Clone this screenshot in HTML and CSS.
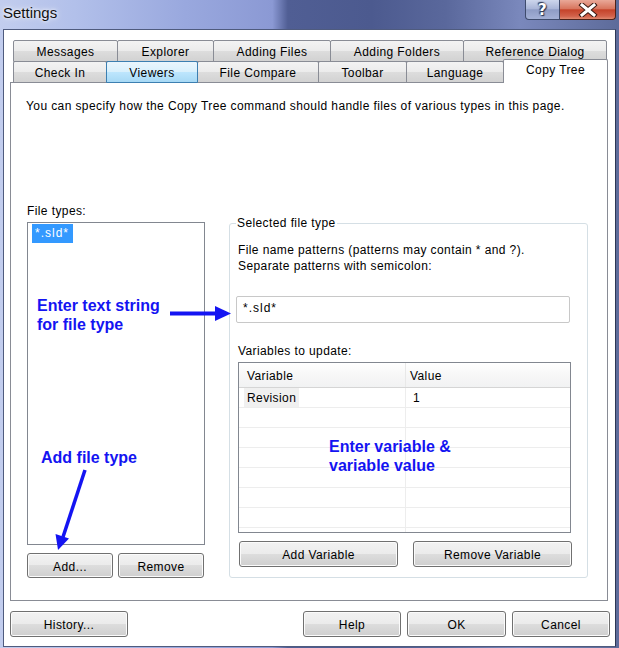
FILE: index.html
```html
<!DOCTYPE html>
<html>
<head>
<meta charset="utf-8">
<title>Settings</title>
<link rel="stylesheet" href="styles.css">
</head>
<body>
<div class="window">
  <div class="titlebar">
    <div class="title">Settings</div>
    <div class="caption-btns">
      <div class="cap cap-help">?</div>
      <div class="cap cap-close">
        <svg width="20" height="14" viewBox="0 0 20 14">
          <path d="M4 2 L16 12 M16 2 L4 12" stroke="#3a1a12" stroke-width="5" stroke-linecap="square" fill="none"/>
          <path d="M4 2 L16 12 M16 2 L4 12" stroke="#ffffff" stroke-width="3" stroke-linecap="square" fill="none"/>
        </svg>
      </div>
    </div>
  </div>
  <div class="client">
    <div class="tabs">
      <div class="tabrow">
        <div class="tab t-messages">Messages</div>
        <div class="tab t-explorer">Explorer</div>
        <div class="tab t-addfiles">Adding Files</div>
        <div class="tab t-addfolders">Adding Folders</div>
        <div class="tab t-refdialog">Reference Dialog</div>
      </div>
      <div class="tabrow row2">
        <div class="tab t-checkin">Check In</div>
        <div class="tab hot t-viewers">Viewers</div>
        <div class="tab t-compare">File Compare</div>
        <div class="tab t-toolbar">Toolbar</div>
        <div class="tab t-language">Language</div>
        <div class="tab selected t-copytree">Copy Tree</div>
      </div>
    </div>
    <div class="panel">
      <p class="desc">You can specify how the Copy Tree command should handle files of various types in this page.</p>
      <div class="columns">
        <div class="left-col">
          <div class="label">File types:</div>
          <div class="listbox">
            <div class="list-item sel">*.sld*</div>
          </div>
          <div class="btn-row">
            <button class="btn btn-add">Add...</button>
            <button class="btn btn-remove">Remove</button>
          </div>
        </div>
        <fieldset class="group">
          <legend>Selected file type</legend>
          <div class="patterns">File name patterns (patterns may contain * and ?).<br>Separate patterns with semicolon:</div>
          <div class="textbox">*.sld*</div>
          <div class="label vars">Variables to update:</div>
          <div class="grid">
            <div class="grid-head">
              <div class="c1">Variable</div>
              <div class="c2">Value</div>
            </div>
            <div class="grid-row">
              <div class="c1"><span class="cellname">Revision</span></div>
              <div class="c2 val">1</div>
            </div>
            <div class="grid-row"><div class="c1"></div><div class="c2"></div></div>
            <div class="grid-row"><div class="c1"></div><div class="c2"></div></div>
            <div class="grid-row"><div class="c1"></div><div class="c2"></div></div>
            <div class="grid-row"><div class="c1"></div><div class="c2"></div></div>
            <div class="grid-row"><div class="c1"></div><div class="c2"></div></div>
            <div class="grid-row"><div class="c1"></div><div class="c2"></div></div>
            <div class="grid-row"><div class="c1"></div><div class="c2"></div></div>
          </div>
          <div class="var-btns">
            <button class="btn btn-var">Add Variable</button>
            <button class="btn btn-var btn-var2">Remove Variable</button>
          </div>
        </fieldset>
      </div>
    </div>
    <div class="footer">
      <button class="btn btn-history">History...</button>
      <button class="btn btn-help">Help</button>
      <button class="btn btn-ok">OK</button>
      <button class="btn btn-cancel">Cancel</button>
    </div>
  </div>

  <div class="note note-text">Enter text string<br>for file type</div>
  <div class="note note-add">Add file type</div>
  <div class="note note-var">Enter variable &amp;<br>variable value</div>
  <svg class="arrows" width="619" height="648" viewBox="0 0 619 648">
    <line x1="170" y1="313.5" x2="218" y2="313.5" stroke="#1414f2" stroke-width="4"/>
    <polygon points="215,306 231,313.5 215,321" fill="#1414f2"/>
    <line x1="85" y1="470" x2="63" y2="537" stroke="#1414f2" stroke-width="3.5"/>
    <polygon points="69,538.5 58,550 55.5,534" fill="#1414f2"/>
  </svg>
</div>
</body>
</html>
```

FILE: styles.css
```css
* { box-sizing: border-box; }

html, body {
  margin: 0;
  padding: 0;
  width: 619px;
  height: 648px;
  overflow: hidden;
  font-family: "Liberation Sans", Arial, sans-serif;
  font-size: 12px;
  color: #000;
}

.window {
  position: relative;
  width: 619px;
  height: 648px;
  overflow: hidden;
  letter-spacing: 0.4px;
  background: linear-gradient(90deg, #c2cdee 0%, #b2c0ea 12%, #99a8de 30%, #8b99d4 44%, #505e94 46.5%, #4c5a8f 60%, #5a689c 72%, #7a88bc 84%, #5d6b9a 100%);
}

.titlebar {
  height: 29px;
  display: flex;
  justify-content: space-between;
  align-items: flex-start;
}

.title {
  padding-left: 3px;
  line-height: 26px;
  font-size: 15px;
  letter-spacing: 0;
  color: #111;
  text-shadow: 0 0 6px rgba(255,255,255,0.9), 0 0 3px rgba(255,255,255,0.9);
}

.caption-btns {
  display: flex;
  margin-right: 3px;
}

.cap {
  height: 20px;
  display: flex;
  align-items: center;
  justify-content: center;
}

.cap-help {
  width: 35px;
  border: 1px solid #3e4b6c;
  border-top: none;
  border-radius: 0 0 0 4px;
  background: linear-gradient(#cdd6ec, #aab6d8 45%, #8e9cc5 52%, #a3b0d6);
  color: #fff;
  font-weight: bold;
  font-size: 15px;
  font-family: "DejaVu Sans", sans-serif;
  text-shadow: 0 0 2px #2a3550, 1px 1px 1px #2a3550, -1px -1px 1px #2a3550;
}

.cap-close {
  width: 56px;
  border: 1px solid #4e2218;
  border-top: none;
  border-left: none;
  border-radius: 0 0 4px 0;
  background: linear-gradient(#e9a898, #d8765f 45%, #c5432a 52%, #d2614a 85%, #e08a70);
}

.client {
  margin: 0 3px;
  height: 618px;
  border: 1px solid #4f5b7e;
  border-right-color: #2d3754;
  background: #ffffff;
  padding: 10px 0 0 6px;
}

/* tabs */
.tabs { margin-left: 3px; }

.tabrow {
  display: flex;
  align-items: flex-end;
  height: 22px;
}

.row2 { margin-top: -1px; }

.tab {
  height: 22px;
  border: 1px solid #898c95;
  border-radius: 2px 2px 0 0;
  margin-left: -1px;
  text-align: center;
  line-height: 22px;
  background: linear-gradient(#f3f3f3 0%, #ebebeb 50%, #dddddd 50%, #d2d2d2 100%);
  white-space: nowrap;
}

.tab:first-child { margin-left: 0; }

.tab.hot {
  border-color: #3c7fb1;
  background: linear-gradient(#eaf6fd 0%, #d9f0fc 50%, #bee6fd 50%, #a7d9f5 100%);
  position: relative;
  z-index: 1;
}

.tab.selected {
  height: 24px;
  margin-top: -2px;
  border-bottom: none;
  background: #ffffff;
  line-height: 21px;
  position: relative;
  z-index: 2;
}

.t-messages { width: 105px; }
.t-explorer { width: 97px; }
.t-addfiles { width: 118px; }
.t-addfolders { width: 134px; }
.t-refdialog { width: 144px; }
.t-checkin { width: 94px; }
.t-viewers { width: 92px; }
.t-compare { width: 122px; }
.t-toolbar { width: 89px; }
.t-language { width: 98px; }
.t-copytree { width: 105px; }

/* panel */
.panel {
  width: 598px;
  height: 519px;
  margin-top: -1px;
  border: 1px solid #898c95;
  background: #ffffff;
  padding: 16px 0 0 15px;
}

.desc {
  margin: 0;
  line-height: 14px;
  height: 14px;
  white-space: nowrap;
}

.columns {
  display: flex;
  align-items: flex-start;
  margin-top: 90px;
}

.left-col {
  width: 178px;
  margin-left: 1px;
}

.label {
  line-height: 16px;
  height: 16px;
}

.listbox {
  margin-top: 3px;
  height: 323px;
  border: 1px solid #828790;
  padding: 1px 4px;
}

.list-item {
  display: inline-block;
  padding: 0 4px 0 3px;
  line-height: 19px;
  height: 19px;
  letter-spacing: 1px;
}

.list-item.sel {
  background: #3399ff;
  color: #ffffff;
}

.btn-row {
  display: flex;
  gap: 5px;
  margin-top: 8px;
}

.btn {
  font-family: "Liberation Sans", Arial, sans-serif;
  font-size: 12px;
  letter-spacing: 0.4px;
  color: #000;
  padding: 2px 0 0 0;
  margin: 0;
  border: 1px solid #707070;
  border-radius: 3px;
  background: linear-gradient(#f2f2f2 0%, #ebebeb 50%, #dddddd 50%, #cfcfcf 100%);
  box-shadow: inset 0 0 0 1px #fbfbfb;
  text-align: center;
}

.btn-add, .btn-remove { width: 86px; height: 25px; }

/* group */
.group {
  margin: 12px 0 0 24px;
  padding: 0 0 10px 8px;
  width: 359px;
  min-width: 0;
  border: 1px solid #d5dfe5;
  border-radius: 3px;
}

.group legend {
  padding: 0 1px;
  margin-left: -2px;
  line-height: 16px;
}

.patterns {
  margin-top: 11px;
  line-height: 16px;
}

.textbox {
  margin-top: 22px;
  margin-left: -2px;
  width: 334px;
  height: 27px;
  border: 1px solid #c8c8c8;
  border-radius: 2px;
  padding-left: 6px;
  line-height: 22px;
  letter-spacing: 1px;
}

.vars { margin-top: 20px; }

.grid {
  margin-top: 3px;
  width: 333px;
  height: 171px;
  border: 1px solid #828790;
  overflow: hidden;
}

.grid-head {
  display: flex;
  height: 25px;
  border-bottom: 1px solid #d5d5d5;
  background: linear-gradient(#ffffff, #f7f7f7 50%, #f1f2f3);
}

.grid-head .c1, .grid-head .c2 { line-height: 26px; }

.c1 {
  width: 167px;
  border-right: 1px solid #e8e8e8;
  padding-left: 8px;
  flex-shrink: 0;
}

.c2 {
  flex: 1;
  padding-left: 4px;
}

.grid-row {
  display: flex;
  height: 20px;
  border-bottom: 1px solid #ededed;
}

.grid-row .c1 {
  padding-left: 5px;
  border-right-color: #ededed;
}

.grid-row .c1, .grid-row .c2 { line-height: 20px; }

.cellname {
  display: inline-block;
  background: #f0f0f0;
  padding: 0 3px;
  height: 19px;
}

.val { padding-left: 7px; }

.var-btns {
  display: flex;
  margin-top: 8px;
}

.btn-var {
  width: 159px;
  height: 26px;
  margin-left: 1px;
}

.btn-var2 { margin-left: 15px; }

/* footer */
.footer {
  display: flex;
  width: 600px;
  margin-top: 10px;
  gap: 6px;
}

.footer .btn { height: 26px; }

.btn-history { width: 118px; margin-right: auto; }
.btn-help { width: 98px; }
.btn-ok { width: 99px; }
.btn-cancel { width: 98px; }

/* annotations */
.note {
  position: absolute;
  font-family: "Liberation Sans", Arial, sans-serif;
  font-weight: bold;
  font-size: 16px;
  line-height: 19px;
  letter-spacing: 0;
  color: #1414f2;
  white-space: nowrap;
}

.note-text { left: 37px; top: 296px; }
.note-add { left: 41px; top: 448px; }
.note-var { left: 329px; top: 437px; }

.arrows {
  position: absolute;
  left: 0;
  top: 0;
  pointer-events: none;
}
```
